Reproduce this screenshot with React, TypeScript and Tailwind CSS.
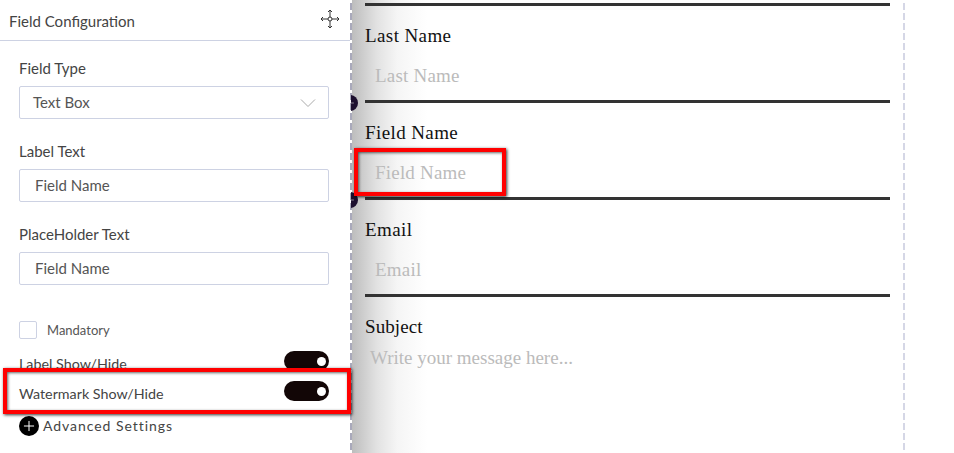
import { Plus } from "lucide-react";

const serif = "font-['Liberation_Serif',serif]";

function Toggle() {
  return (
    <div className="flex h-5 w-[45px] items-center justify-end rounded-full bg-[#120606] pr-[3px]">
      <div className="h-[9px] w-[9px] rounded-full bg-white" />
    </div>
  );
}

function ConfigField({ label, value, select }: { label: string; value: string; select?: boolean }) {
  return (
    <div className="flex flex-col">
      <span className="text-[15px] leading-[20px] text-[#444]">{label}</span>
      <div className={`mt-[8px] flex h-[33px] w-[310px] items-center justify-between rounded-[2px] border border-[#cdd2e3] pr-[12px] text-[15px] text-[#555] ${select ? "pl-[13px]" : "pl-[15px]"}`}>
        <span>{value}</span>
        {select && (
          <svg width="16" height="10" viewBox="0 0 16 10" fill="none" stroke="#aaa" strokeWidth="1">
            <path d="M1 1.5L8 8.5L15 1.5" />
          </svg>
        )}
      </div>
    </div>
  );
}

function FormRow({ label, placeholder }: { label: string; placeholder: string }) {
  return (
    <div className="h-[97px] border-b-[3px] border-[#333]">
      <div className={`pt-[18px] text-[19px] leading-[24px] tracking-[0.4px] text-[#111] ${serif}`}>{label}</div>
      <div className={`mt-[16px] pl-[10px] text-[19px] leading-[24px] tracking-[0.2px] text-[#bbb] ${serif}`}>{placeholder}</div>
    </div>
  );
}

function AddDot({ top }: { top: string }) {
  return (
    <div className={`absolute left-[351px] h-4 w-[7px] overflow-hidden ${top}`}>
      <div className="flex h-4 w-4 -translate-x-[9px] items-center justify-center rounded-full bg-[#1c0f2e]">
        <Plus size={12} strokeWidth={1} className="text-white" />
      </div>
    </div>
  );
}

export default function App() {
  return (
    <div className="relative flex h-[453px] w-[954px] overflow-hidden bg-white font-['Lato',sans-serif]">
      <aside className="w-[352px] shrink-0">
        <div className="mr-[2px] flex h-[41px] items-center justify-between border-b border-[#cdd2e3] pr-[10px] pl-[9px]">
          <span className="mt-[2px] text-[15px] text-[#444]">Field Configuration</span>
          <svg width="20" height="20" viewBox="0 0 20 20" fill="none" stroke="#333" strokeWidth="1" className="mb-[3px]">
            <path d="M10 1V19M1 10H19" />
            <path d="M8 3L10 1L12 3M8 17L10 19L12 17M3 8L1 10L3 12M17 8L19 10L17 12" />
            <circle cx="10" cy="10" r="2" fill="#fff" />
          </svg>
        </div>
        <div className="flex flex-col gap-[22px] pt-[17px] pl-[19px]">
          <ConfigField label="Field Type" value="Text Box" select />
          <ConfigField label="Label Text" value="Field Name" />
          <ConfigField label="PlaceHolder Text" value="Field Name" />
        </div>
        <div className="mt-[36px] flex h-[18px] items-center gap-[10px] pl-[19px]">
          <div className="h-[18px] w-[18px] rounded-[2px] border border-[#cdd2e3]" />
          <span className="text-[13px] leading-[18px] text-[#555]">Mandatory</span>
        </div>
        <div className="mt-[12px] flex h-[20px] items-center justify-between pr-[23px] pl-[19px]">
          <span className="mt-[6px] text-[14.3px] leading-[20px] text-[#444]">Label Show/Hide</span>
          <Toggle />
        </div>
        <div className="mt-[10px] flex h-[20px] items-center justify-between pr-[23px] pl-[19px]">
          <span className="mt-[6px] text-[14.3px] leading-[20px] text-[#444]">Watermark Show/Hide</span>
          <Toggle />
        </div>
        <div className="mt-[15px] flex items-center gap-[4px] pl-[19px]">
          <div className="flex h-5 w-5 items-center justify-center rounded-full bg-black">
            <Plus size={16} strokeWidth={1.5} className="text-white" />
          </div>
          <span className="text-[14px] leading-[20px] tracking-[0.95px] text-[#444]">Advanced Settings</span>
        </div>
      </aside>

      <main className="h-full flex-1 bg-[linear-gradient(90deg,#bdbdbd_0px,#e2e2e2_25px,#f5f5f5_45px,#ffffff_75px)]">
        <div className="ml-[13px] w-[525px]">
          <div className="mt-[3px] h-[3px] bg-[#333]" />
          <FormRow label="Last Name" placeholder="Last Name" />
          <FormRow label="Field Name" placeholder="Field Name" />
          <FormRow label="Email" placeholder="Email" />
          <div className={`pt-[18px] text-[19px] leading-[24px] tracking-[0.1px] text-[#111] ${serif}`}>Subject</div>
          <div className={`mt-[7px] pl-[5px] text-[19px] leading-[24px] text-[#bbb] ${serif}`}>Write your message here...</div>
        </div>
      </main>

      {/* dashed canvas guides */}
      <div className="absolute top-[-7px] left-[350px] h-[470px] w-[2px] bg-[repeating-linear-gradient(180deg,#a9a9bb_0px,#a9a9bb_7px,transparent_7px,transparent_10px)]" />
      <div className="absolute top-[-7px] left-[903px] h-[470px] w-[2px] bg-[repeating-linear-gradient(180deg,#d5d7e6_0px,#d5d7e6_7px,transparent_7px,transparent_10px)]" />

      {/* row insert buttons peeking out from under the panel edge */}
      <AddDot top="top-[95px]" />
      <AddDot top="top-[192px]" />

      {/* red annotation boxes */}
      <div className="absolute top-[368px] left-[3px] h-[46px] w-[348px] border-[4px] border-[#f00] shadow-[1px_1px_3px_rgba(0,0,0,0.8),inset_1px_1px_3px_rgba(0,0,0,0.6)]" />
      <div className="absolute top-[148px] left-[354px] h-[48px] w-[152px] border-[4px] border-[#f00] shadow-[1px_1px_3px_rgba(0,0,0,0.8),inset_1px_1px_3px_rgba(0,0,0,0.6)]" />
    </div>
  );
}
